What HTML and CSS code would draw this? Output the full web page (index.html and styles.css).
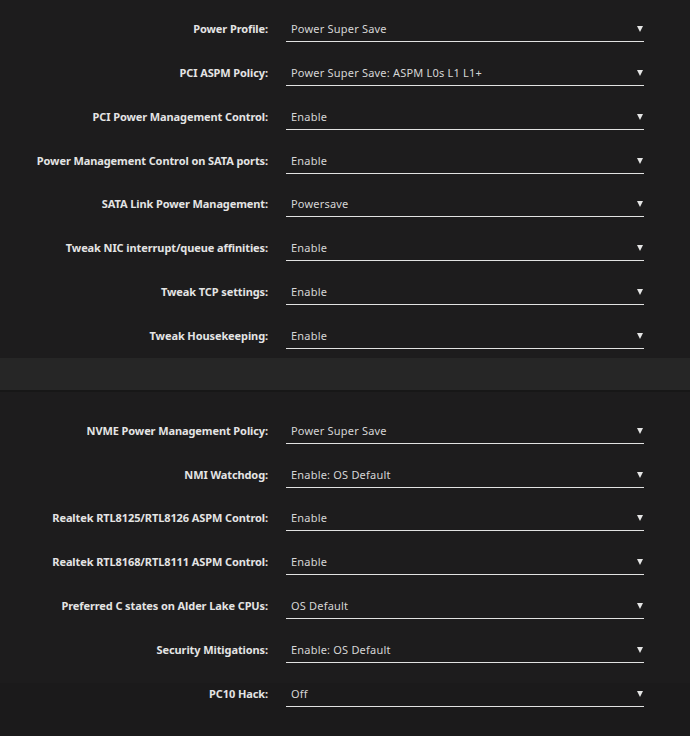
FILE: index.html
```html
<!DOCTYPE html>
<html>
  <head>
    <meta name="viewport" content="width=device-width, initial-scale=1">
    <link rel="stylesheet" href="styles.css">
  </head>

  <body>
    <!-- Ajustes gerais de energia -->
    <div class="section first">
      <div class="row">
        <label class="label">Power Profile:</label>
        <div class="select">Power Super Save</div>
      </div>
      <div class="row">
        <label class="label">PCI ASPM Policy:</label>
        <div class="select">Power Super Save: ASPM L0s L1 L1+</div>
      </div>
      <div class="row">
        <label class="label">PCI Power Management Control:</label>
        <div class="select">Enable</div>
      </div>
      <div class="row">
        <label class="label">Power Management Control on SATA ports:</label>
        <div class="select">Enable</div>
      </div>
      <div class="row">
        <label class="label">SATA Link Power Management:</label>
        <div class="select">Powersave</div>
      </div>
      <div class="row">
        <label class="label">Tweak NIC interrupt/queue affinities:</label>
        <div class="select">Enable</div>
      </div>
      <div class="row">
        <label class="label">Tweak TCP settings:</label>
        <div class="select">Enable</div>
      </div>
      <div class="row">
        <label class="label">Tweak Housekeeping:</label>
        <div class="select">Enable</div>
      </div>
    </div>

    <div class="divider"></div>

    <!-- Ajustes de hardware -->
    <div class="section second">
      <div class="row">
        <label class="label">NVME Power Management Policy:</label>
        <div class="select">Power Super Save</div>
      </div>
      <div class="row">
        <label class="label">NMI Watchdog:</label>
        <div class="select">Enable: OS Default</div>
      </div>
      <div class="row">
        <label class="label">Realtek RTL8125/RTL8126 ASPM Control:</label>
        <div class="select">Enable</div>
      </div>
      <div class="row">
        <label class="label">Realtek RTL8168/RTL8111 ASPM Control:</label>
        <div class="select">Enable</div>
      </div>
      <div class="row">
        <label class="label">Preferred C states on Alder Lake CPUs:</label>
        <div class="select">OS Default</div>
      </div>
      <div class="row">
        <label class="label">Security Mitigations:</label>
        <div class="select">Enable: OS Default</div>
      </div>
    </div>

    <div class="section last">
      <div class="row">
        <label class="label">PC10 Hack:</label>
        <div class="select">Off</div>
      </div>
    </div>
  </body>
</html>
```

FILE: styles.css
```css
html, body {
  margin: 0;
  height: 100%;
  background-color: #1b1a1b;
  font-family: "Noto Sans", sans-serif;
  font-size: 11px;
  overflow: hidden;
}

.section {
  background-color: #1d1c1d;
}

.first {
  padding-bottom: 7px;
}

.second {
  padding-top: 10px;
}

/* ultimo bloco fica um tom mais escuro a partir do meio */
.last {
  background: linear-gradient(#1d1c1d 18px, #1b1a1b 18px);
}

.divider {
  height: 32px;
  background-color: #262626;
  border-bottom: 2px solid #171717;
}

.row {
  display: flex;
  height: 43.85px;
  padding-top: 17px;
  box-sizing: border-box;
}

.label {
  width: 268px;
  text-align: right;
  line-height: 24px;
  font-weight: bold;
  letter-spacing: -0.1px;
  color: #e4e4e4;
}

.select {
  position: relative;
  margin-left: 18px;
  width: 358px;
  height: 25px;
  box-sizing: border-box;
  padding-left: 5px;
  line-height: 24px;
  letter-spacing: 0.2px;
  color: #d6d6d6;
  border-bottom: 1px solid #e2e2e2;
}

/* setinha do dropdown */
.select::after {
  content: "";
  position: absolute;
  right: 1px;
  top: 9px;
  border-left: 3px solid transparent;
  border-right: 3px solid transparent;
  border-top: 6px solid #e4e4e4;
}
```
